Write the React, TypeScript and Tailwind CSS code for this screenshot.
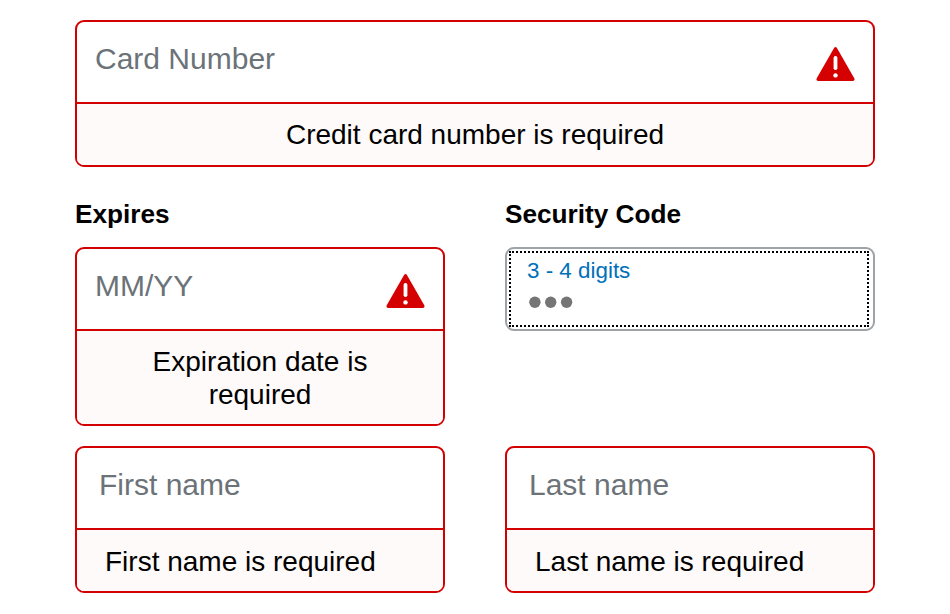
import React from "react";

function WarningIcon() {
  return (
    <svg viewBox="0 0 39 34" className="block h-[34px] w-[39px]" aria-hidden="true">
      <path
        d="M18.2 0.8 Q19.5 -0.6 20.8 0.8 L38.4 31.6 Q38.8 33.6 37.2 33.9 L1.8 33.9 Q0.2 33.6 0.6 31.6 Z"
        fill="#d50000"
      />
      <rect x="17.6" y="8.9" width="3.8" height="14.2" rx="1.8" fill="#fff" />
      <circle cx="19.5" cy="28.4" r="2.2" fill="#fff" />
    </svg>
  );
}

function MaskedDots() {
  return (
    <svg viewBox="0 0 46 12" className="mt-[12px] ml-[2px] block h-[12px] w-[46px]" aria-hidden="true">
      <circle cx="5.9" cy="6.3" r="5.7" fill="#757575" />
      <circle cx="21.7" cy="6.3" r="5.7" fill="#757575" />
      <circle cx="37.6" cy="6.3" r="5.7" fill="#757575" />
    </svg>
  );
}

type FieldProps = {
  placeholder: string;
  placeholderClass: string;
  icon?: boolean;
  error: React.ReactNode;
  errorClass: string;
};

function Field({ placeholder, placeholderClass, icon, error, errorClass }: FieldProps) {
  return (
    <div className="overflow-hidden rounded-[9px] border-2 border-[#d20000] bg-white">
      <div className="flex h-[80px] items-start justify-between pr-[18px]">
        <span className={placeholderClass}>{placeholder}</span>
        {icon && (
          <div className="pt-[25px]">
            <WarningIcon />
          </div>
        )}
      </div>
      <div className={errorClass}>{error}</div>
    </div>
  );
}

const ph = "pt-[20px] text-[30px] leading-[34px] text-[#6c7378] whitespace-nowrap";
const err = "border-t-2 border-[#d20000] bg-[#fffafa] text-[28px] leading-[33px] text-black";
const heading = "h-[49px] text-[26.2px] leading-[32px] font-bold";

export default function App() {
  return (
    <main className="h-[614px] w-[950px] overflow-hidden bg-white px-[75px] pt-[20px] font-['Liberation_Sans',Arial,sans-serif]">
      <Field
        placeholder="Card Number"
        placeholderClass={`${ph} pl-[18px]`}
        icon
        error="Credit card number is required"
        errorClass={`${err} h-[63px] pt-[14px] text-center`}
      />
      <div className="mt-[31px] grid grid-cols-2 gap-x-[60px]">
        <div>
          <h2 className={heading}>Expires</h2>
          <Field
            placeholder="MM/YY"
            placeholderClass={`${ph} pl-[18px]`}
            icon
            error={<>Expiration date is<br />required</>}
            errorClass={`${err} h-[95px] pt-[14px] text-center`}
          />
        </div>
        <div>
          <h2 className={heading}>Security Code</h2>
          <div className="h-[84px] rounded-[9px] border-2 border-[#9da3a6] py-[2px] pr-[4px] pl-[2px]">
            <div className="h-full border-2 border-dotted border-black pl-[16px] pt-[5px]">
              <div className="text-[22.4px] leading-[26px] text-[#0070ba]">3 - 4 digits</div>
              <MaskedDots />
            </div>
          </div>
        </div>
      </div>
      <div className="mt-[20px] grid grid-cols-2 gap-x-[60px]">
        <Field
          placeholder="First name"
          placeholderClass={`${ph} pl-[22px]`}
          error="First name is required"
          errorClass={`${err} h-[63px] pt-[15px] pl-[28px]`}
        />
        <Field
          placeholder="Last name"
          placeholderClass={`${ph} pl-[22px]`}
          error="Last name is required"
          errorClass={`${err} h-[63px] pt-[15px] pl-[28px]`}
        />
      </div>
    </main>
  );
}
